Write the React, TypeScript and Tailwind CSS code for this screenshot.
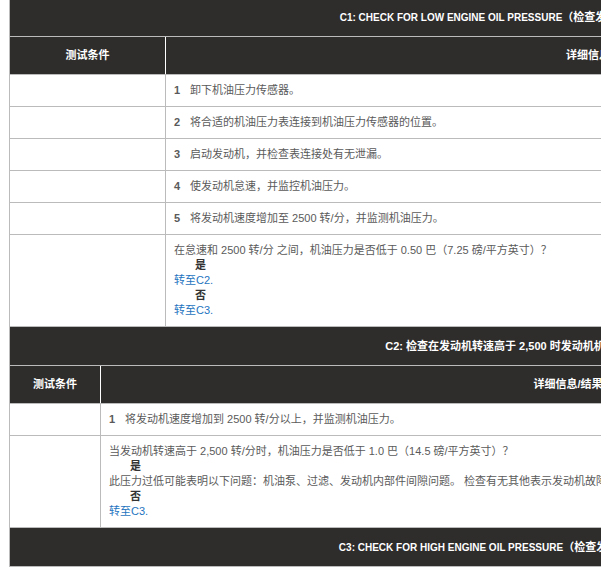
const font = "font-['Liberation_Sans','Noto_Sans_CJK_SC',sans-serif]";
const line = "border border-[#bbbbbb]";
const darkCell = "border border-[#bbbbbb] bg-[#2e2d2c] text-white font-bold";

function Section({ title, firstCol, rows }: { title: React.ReactNode; firstCol: number; rows: React.ReactNode[] }) {
  return (
    <table className="-mt-px w-[1027px] table-fixed border-collapse ml-[9px] text-[11px] leading-[15px] text-[#5a5a5a]">
      <colgroup>
        <col style={{ width: firstCol }} />
        <col />
      </colgroup>
      <tbody>
        <tr>
          <td colSpan={2} className={`${darkCell} text-center pt-[12px] pb-[11px]`}>{title}</td>
        </tr>
        <tr>
          <td className={`${darkCell} !border-r-white text-center py-[11px]`}>测试条件</td>
          <td className={`${darkCell} !border-l-white text-center py-[11px]`}>详细信息/结果</td>
        </tr>
        {rows.map((r, i) => (
          <tr key={i}>
            <td className={line}></td>
            <td className={`${line} px-2 py-2`}>{r}</td>
          </tr>
        ))}
      </tbody>
    </table>
  );
}

function Step({ n, text }: { n: number; text: string }) {
  return (
    <div className="flex">
      <b className="w-4 font-bold">{n}</b>
      <span>{text}</span>
    </div>
  );
}

function Answer({ label }: { label: string }) {
  return <div className="pl-[21px] font-bold text-[#333333]">{label}</div>;
}

function Goto({ label }: { label: string }) {
  return <div className="text-[#1e74c0]">{label}</div>;
}

export default function App() {
  return (
    <div className={`${font} w-[601px] h-[567px] overflow-hidden bg-white`}>
      <div className="-mt-[3px]">
        <Section
          title={<><span className="text-[10px]">C1: CHECK FOR LOW ENGINE OIL PRESSURE</span>（检查发动机机油压力过低）</>}
          firstCol={156}
          rows={[
            <Step n={1} text="卸下机油压力传感器。" />,
            <Step n={2} text="将合适的机油压力表连接到机油压力传感器的位置。" />,
            <Step n={3} text="启动发动机，并检查表连接处有无泄漏。" />,
            <Step n={4} text="使发动机怠速，并监控机油压力。" />,
            <Step n={5} text="将发动机速度增加至 2500 转/分，并监测机油压力。" />,
            <div>
              <div>在怠速和 2500 转/分 之间，机油压力是否低于 0.50 巴（7.25 磅/平方英寸）？</div>
              <Answer label="是" />
              <Goto label="转至C2." />
              <Answer label="否" />
              <Goto label="转至C3." />
            </div>,
          ]}
        />
        <Section
          title="C2: 检查在发动机转速高于 2,500 时发动机机油压力过低"
          firstCol={91}
          rows={[
            <Step n={1} text="将发动机速度增加到 2500 转/分以上，并监测机油压力。" />,
            <div>
              <div>当发动机转速高于 2,500 转/分时，机油压力是否低于 1.0 巴（14.5 磅/平方英寸）？</div>
              <Answer label="是" />
              <div>此压力过低可能表明以下问题：机油泵、过滤、发动机内部件间隙问题。 检查有无其他表示发动机故障的现象。</div>
              <Answer label="否" />
              <Goto label="转至C3." />
            </div>,
          ]}
        />
        <Section
          title={<><span className="text-[10px]">C3: CHECK FOR HIGH ENGINE OIL PRESSURE</span>（检查发动机机油压力过高）</>}
          firstCol={113}
          rows={[]}
        />
      </div>
    </div>
  );
}
